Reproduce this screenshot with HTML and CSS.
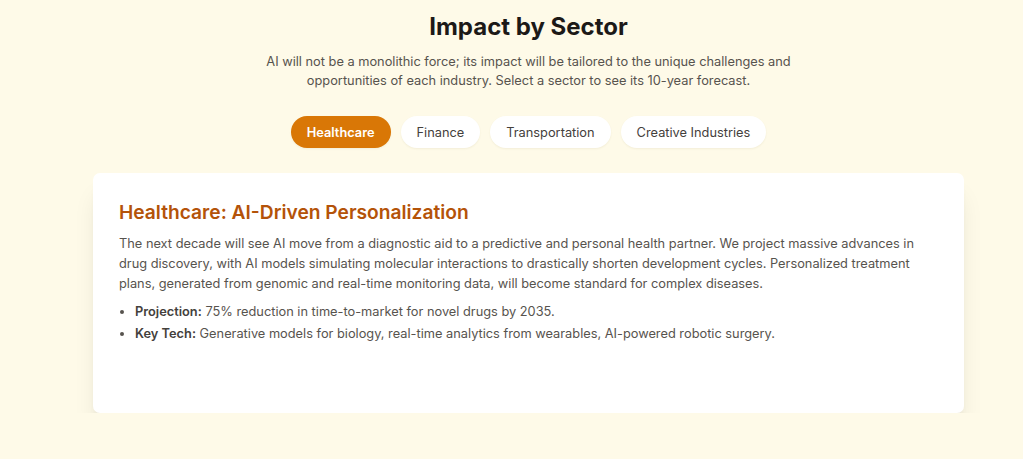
FILE: index.html
```html
<!DOCTYPE html>
<html lang="en">
<head>
<meta charset="utf-8">
<title>Impact by Sector</title>
<link rel="stylesheet" href="styles.css">
</head>
<body>
<main class="page">
  <section class="sector">
    <h2 class="title">Impact by Sector</h2>
    <p class="lead">AI will not be a monolithic force; its impact will be tailored to the unique challenges and opportunities of each industry. Select a sector to see its 10-year forecast.</p>
    <div class="tabs">
      <button class="tab active">Healthcare</button>
      <button class="tab">Finance</button>
      <button class="tab">Transportation</button>
      <button class="tab">Creative Industries</button>
    </div>
    <div class="card">
      <h3 class="card-title">Healthcare: AI-Driven Personalization</h3>
      <p class="card-text">The next decade will see AI move from a diagnostic aid to a predictive and personal health partner. We project massive advances in drug discovery, with AI models simulating molecular interactions to drastically shorten development cycles. Personalized treatment plans, generated from genomic and real-time monitoring data, will become standard for complex diseases.</p>
      <ul class="points">
        <li><strong>Projection:</strong> 75% reduction in time-to-market for novel drugs by 2035.</li>
        <li><strong>Key Tech:</strong> Generative models for biology, real-time analytics from wearables, AI-powered robotic surgery.</li>
      </ul>
    </div>
  </section>
</main>
</body>
</html>
```
FILE: styles.css
```css
* { box-sizing: border-box; }
html, body { margin: 0; padding: 0; }
body {
  background: #fefae8;
  font-family: Inter, "Noto Sans", sans-serif;
  color: #1c1917;
}
.page {
  padding-left: 34px;
}
.sector {
  width: 871px;
  margin: 0 auto;
  padding-top: 11px;
  display: flex;
  flex-direction: column;
  align-items: center;
}
.title {
  margin: 0;
  font-size: 24px;
  line-height: 32px;
  font-weight: 700;
  color: #1c1917;
}
.lead {
  margin: 9px 0 0;
  width: 540px;
  text-align: center;
  font-size: 12.8px;
  line-height: 19.2px;
  color: #57534e;
}
.tabs {
  margin-top: 26px;
  display: flex;
  gap: 10px;
}
.tab {
  font-family: inherit;
  font-size: 12.8px;
  height: 32px;
  padding: 0 16px;
  border: none;
  border-radius: 999px;
  background: #ffffff;
  color: #44403c;
  box-shadow: 0 1px 2px rgba(120, 100, 40, 0.08);
}
.tab.active {
  background: #d97706;
  color: #ffffff;
  font-weight: 600;
}
.card {
  align-self: stretch;
  margin-top: 25px;
  min-height: 240px;
  background: #ffffff;
  border-radius: 7px;
  padding: 27px 26px 24px;
  box-shadow: 0 20px 25px -5px rgba(0,0,0,0.1), 0 8px 10px -6px rgba(0,0,0,0.1);
}
.card-title {
  margin: 0;
  font-size: 19.2px;
  line-height: 24px;
  font-weight: 600;
  color: #b45309;
}
.card-text {
  margin: 10px 0 0;
  font-size: 12.8px;
  line-height: 19.6px;
  color: #57534e;
}
.points {
  margin: 9px 0 0;
  padding-left: 16px;
  font-size: 12.8px;
  line-height: 19.2px;
  color: #57534e;
}
.points li { margin-bottom: 3px; }
.points strong { color: #44403c; font-weight: 600; }
```
